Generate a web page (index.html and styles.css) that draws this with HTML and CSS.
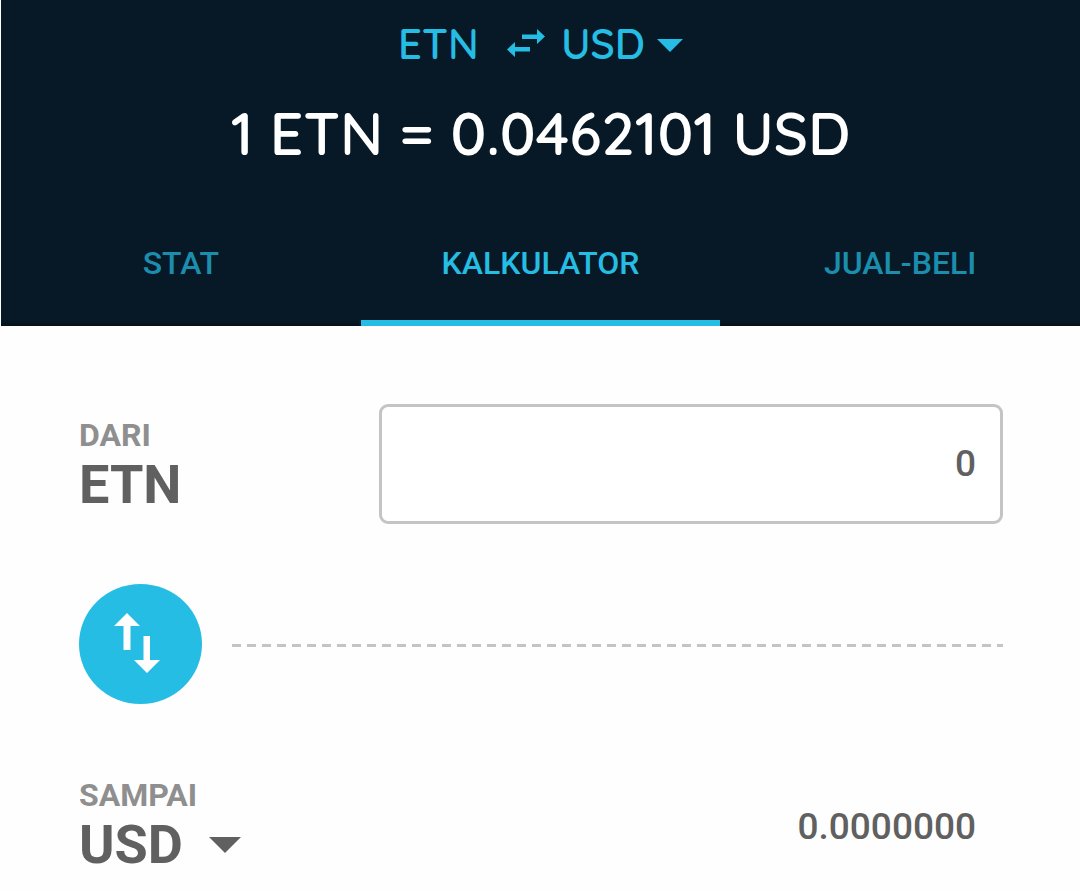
FILE: index.html
```html
<!DOCTYPE html>
<html lang="id">
<head>
  <meta charset="UTF-8">
  <meta name="viewport" content="width=device-width, initial-scale=1.0">
  <title>Kalkulator ETN</title>
  <link rel="stylesheet" href="styles.css">
</head>
<body>
  <header>
    <div class="pair">
      <span>ETN</span>
      <svg class="pair-arrows" viewBox="0 0 38 28" aria-hidden="true">
        <path d="M15 5.500h15V0l8 7.500-8 7.500V10H15zM23 18v4.500H8V28l-8-7.500L8 13v5z"/>
      </svg>
      <div class="picker">
        <select aria-label="Mata uang">
          <option>USD</option>
        </select>
        <svg class="caret" viewBox="0 0 32 16" aria-hidden="true"><path d="M0 0h32L16 16z"/></svg>
      </div>
    </div>
    <h1>1 ETN = 0.0462101 USD</h1>
    <nav>
      <a href="#stat">STAT</a>
      <a href="#kalkulator" class="active">KALKULATOR</a>
      <a href="#jual-beli">JUAL-BELI</a>
    </nav>
  </header>

  <main>
    <div class="row">
      <label class="currency" for="amount">
        <span class="caption">DARI</span>
        <span class="code">ETN</span>
      </label>
      <input id="amount" class="value" type="text" inputmode="decimal" value="0">
    </div>

    <div class="swap">
      <button type="button" aria-label="Tukar">
        <svg viewBox="0 0 46 60" aria-hidden="true">
          <path d="M13 0l13 13h-9.500v24h-7V13H0zM29.500 23h6.500v24h10L33 60 20 47h9.500z"/>
        </svg>
      </button>
      <div class="dashes"></div>
    </div>

    <div class="row">
      <div class="currency">
        <label class="caption" for="target">SAMPAI</label>
        <div class="picker code">
          <select id="target">
            <option>USD</option>
          </select>
          <svg class="caret" viewBox="0 0 32 16" aria-hidden="true"><path d="M0 0h32L16 16z"/></svg>
        </div>
      </div>
      <output class="value result" for="amount target">0.0000000</output>
    </div>
  </main>
</body>
</html>
```
FILE: styles.css
```css
* {
  box-sizing: border-box;
}

body {
  margin: 0;
  background-color: #fefefe;
  font-family: Roboto, Arial, sans-serif;
  color: #606060;
}

header {
  margin-left: 1px;
  background: linear-gradient(to top, #04111c, #071926 6px);
  font-family: Quicksand, Lato, sans-serif;
  color: #25bde3;
}

.pair {
  display: flex;
  justify-content: center;
  align-items: center;
  height: 86px;
  font-size: 42px;
  font-weight: 600;
}

.pair-arrows {
  width: 38px;
  height: 28px;
  margin: 0 16px 0 28px;
  fill: currentColor;
}

.picker {
  position: relative;
  display: inline-block;
}

select {
  appearance: none;
  margin: 0;
  padding: 0 38px 0 0;
  border: none;
  background: none;
  font: inherit;
  color: inherit;
  cursor: pointer;
}

.caret {
  position: absolute;
  right: 0;
  top: 50%;
  width: 26px;
  height: 13px;
  margin-top: -4px;
  fill: currentColor;
  pointer-events: none;
}

h1 {
  margin: 0;
  height: 112px;
  font-size: 59px;
  font-weight: 600;
  line-height: 94px;
  text-align: center;
  color: #fff;
}

nav {
  display: grid;
  grid-template-columns: 1fr 1fr 1fr;
}

nav a {
  height: 128px;
  border-bottom: 6px solid transparent;
  font-family: Roboto, Arial, sans-serif;
  font-size: 32px;
  font-weight: 500;
  line-height: 130px;
  text-align: center;
  text-decoration: none;
  color: #1c8ead;
}

nav a.active {
  border-bottom-color: #25bde3;
  color: #25bde3;
}

main {
  display: flex;
  flex-direction: column;
  gap: 60px;
  padding: 78px 77px 0 79px;
}

.row {
  display: grid;
  grid-template-columns: 300px 1fr;
  align-items: center;
  height: 120px;
}

.currency {
  display: flex;
  flex-direction: column;
  align-items: flex-start;
  padding-top: 2px;
}

.caption {
  font-size: 32px;
  font-weight: bold;
  line-height: 40px;
  color: #8f8f8f;
}

.code {
  font-size: 54px;
  font-weight: bold;
  line-height: 60px;
}

.code select {
  padding-right: 58px;
}

.code .caret {
  width: 32px;
  height: 16px;
  margin-top: -8px;
}

.value {
  width: 100%;
  height: 120px;
  padding: 0 24px;
  border: 3px solid transparent;
  font-family: inherit;
  font-size: 37px;
  font-weight: 500;
  line-height: 114px;
  text-align: right;
  color: inherit;
}

input.value {
  padding-bottom: 2px;
  border-color: #c4c4c4;
  border-radius: 9px;
  background-color: #fff;
}

.result {
  padding-top: 3px;
}

.swap {
  display: flex;
  align-items: center;
  gap: 30px;
}

.swap button {
  display: flex;
  justify-content: center;
  align-items: center;
  width: 123px;
  height: 120px;
  padding: 0 8px 3px 0;
  border: none;
  border-radius: 50%;
  background-color: #25bde3;
  cursor: pointer;
}

.swap svg {
  width: 46px;
  height: 60px;
  fill: #fff;
}

.dashes {
  flex: 1;
  height: 3px;
  margin-top: 3px;
  background: repeating-linear-gradient(to right, #c4c4c4 0 9px, transparent 9px 15px);
}
```
